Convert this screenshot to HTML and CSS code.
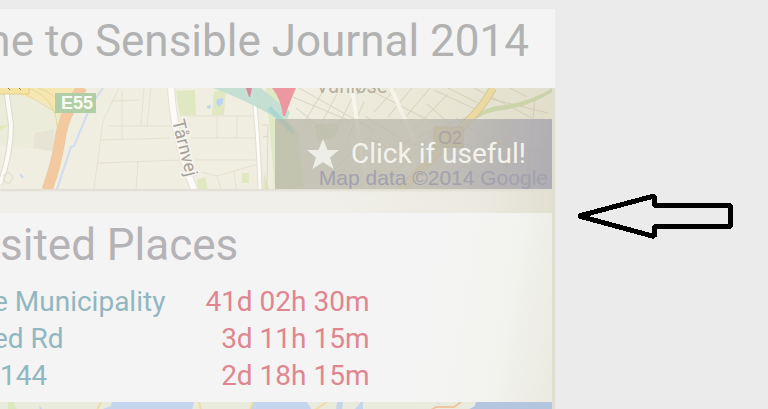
FILE: index.html
```html
<!DOCTYPE html>
<html lang="en">
<head>
<meta charset="utf-8">
<title>Sensible Journal 2014</title>
<link rel="stylesheet" href="styles.css">
</head>
<body>
<main class="page">
  <section class="phone">
    <header class="title-bar"><h1 class="title">me to Sensible Journal 2014</h1></header>
    <div class="content">
      <div class="map">
        <svg class="map-art" viewBox="0 88 552 101" preserveAspectRatio="none" aria-hidden="true">
          <defs>
            <linearGradient id="shade" x1="0" x2="1" y1="0" y2="0.15">
              <stop offset="0.55" stop-color="#c8c49c" stop-opacity="0"/>
              <stop offset="1" stop-color="#bdb99a" stop-opacity="0.3"/>
            </linearGradient>
          </defs>
          <rect y="88" width="552" height="101" fill="#f0eee1"/>
          <path d="M0 88H62L58 124 54 151 0 145Z" fill="#ebecda"/>
          <path d="M35 133L54 129 53 151 33 148Z" fill="#e8e4d5"/>
          <path d="M0 126L8 125 0 131Z" fill="#dfebb9"/>
          <path d="M12 88H74L59 119Q52 103 31 98L12 92Z" fill="#f5e7b2"/>
          <path d="M28 88Q56 98 57 126M38 88Q56 93 62 108M20 91L54 111" fill="none" stroke="#ead79a" stroke-width="1"/>
          <path d="M6 88L11 125Q11 154 0 184" fill="none" stroke="#dcdacd" stroke-width="6"/>
          <path d="M6 88L11 125Q11 154 0 184" fill="none" stroke="#fbfaf4" stroke-width="4"/>
          <path d="M4 175L9 172 13 177 9 184 4 181Z" fill="none" stroke="#deddc9"/>
          <path d="M82 87Q63 116 60 140Q56 166 47 190" fill="none" stroke="#e8cba6" stroke-width="11"/>
          <path d="M82 87Q63 116 60 140Q56 166 47 190" fill="none" stroke="#f5c9a0" stroke-width="9"/>
          <path d="M103 88L91 105 74 146 71 147 57 189" fill="none" stroke="#cfddef" stroke-width="2"/>
          <path d="M20 174L23 178" stroke="#c7d9f1" stroke-width="2"/>
          <path d="M119 88L103 121 94 189M101 140L170 138M108 126L172 126M122 91V140M144 88L141 126M151 88L147 126M98 163L182 160M138 162L136 189M112 101L139 100M188 116H255L257 138H191M217 116V138M237 116V138M195 160H256M201 172L217 176 258 164M217 176L221 189M234 170L236 189" fill="none" stroke="#e4e1cf"/>
          <path d="M176 91L195 90 196 115 180 116ZM214 91L226 90 224 115 212 115ZM242 173H249V183H242ZM197 180L205 177 208 189H198ZM264 173L269 189H263Z" fill="#e0e8c1"/>
          <path d="M217 99L223 98 223 103 219 107 216 103ZM207 106L211 105 210 109 207 108Z" fill="#bdd4f0"/>
          <path d="M171 88Q174 139 194 189" fill="none" stroke="#e4e1d7" stroke-width="8"/>
          <path d="M171 88Q174 139 194 189" fill="none" stroke="#fcfbf7" stroke-width="6"/>
          <path d="M253 88Q258 130 260 189" fill="none" stroke="#e1dfd3" stroke-width="5"/>
          <path d="M253 88Q258 130 260 189" fill="none" stroke="#fdfcf8" stroke-width="3"/>
          <path d="M262 125L268 125 267 189M263 137L268 136" fill="none" stroke="#dedac8"/>
          <path d="M266 88H281L282 112 298 133 304 189H275Z" fill="#dfe9c4"/>
          <path d="M213 88H261L290 112 285 124Q258 105 213 88Z" fill="#c5dfd3"/>
          <path d="M269 108L294 133" stroke="#a8d8ce" stroke-width="5"/>
          <path d="M314 125L338 123 335 138 318 141Z" fill="#d7e1bf"/>
          <path d="M293 97L350 121M299 88L375 131M296 108L330 135M305 121L323 91M320 126L337 94M335 133L352 98M348 138L364 102M366 88L432 122M374 112L395 89M388 117L412 88M399 125L430 88M411 132L448 94M427 104L450 124M434 90L475 109M448 88L478 103M365 116L410 145 440 145 490 185M384 151L465 118M456 118L491 142 548 153M474 88L532 118M491 99L548 113M510 88L527 97M535 98L526 187M450 180L510 120M380 187L434 134M334 170L367 138 412 158" fill="none" stroke="#dad4c2"/>
          <path d="M352 88L367 189M391 88L414 140" fill="none" stroke="#fbfaf2" stroke-width="4"/>
          <path d="M475 119Q482 106 506 105Q535 100 552 88V92Q534 104 510 109Q488 111 475 119Z" fill="#cfdcb0"/>
          <path d="M493 88Q484 106 464 125L420 171 401 189" fill="none" stroke="#dfcb92" stroke-width="8"/>
          <path d="M493 88Q484 106 464 125L420 171 401 189" fill="none" stroke="#f6e2a4" stroke-width="6"/>
          <path d="M272 88H296Q291 99 285 116H283Q281 99 272 88Z" fill="#ed98a1"/>
          <path d="M246 88H252L250 97H249Z" fill="#d9899a"/>
          <path d="M-2 86H29V94H-2Z" fill="#f6e4a4" stroke="#e5ce88"/>
          <path d="M8 88L10 90M19 88L21 90" stroke="#837f6c"/>
          <rect x="55" y="93" width="41" height="20" fill="#b1cea7"/>
          <text class="road-sign" x="61" y="109">E55</text>
          <text class="street" transform="translate(172 121) rotate(76)">Tårnvej</text>
          <text class="district" x="316" y="93">Vanløse</text>
          <rect x="434" y="127" width="29" height="20" fill="#e6cf8c" stroke="#c9b078"/>
          <text class="ring-sign" x="438" y="144">O2</text>
          <rect y="88" width="552" height="101" fill="url(#shade)"/>
        </svg>
        <button class="useful" type="button">
          <svg class="star" viewBox="0 0 32 31" aria-hidden="true"><path d="M16 0L20.500 11H32L23 18.500 26.500 30 16 23 5.500 30 9 18.500 0 11H11.500Z"/></svg>
          <span>Click if useful!</span>
        </button>
        <p class="credit">Map data ©2014 Google</p>
      </div>
      <section class="card">
        <h2 class="card-title">sited Places</h2>
        <table class="places">
          <tr><th scope="row">e Municipality</th><td>41d 02h 30m</td></tr>
          <tr><th scope="row">ed Rd</th><td>3d 11h 15m</td></tr>
          <tr><th scope="row">&nbsp;144</th><td>2d 18h 15m</td></tr>
        </table>
      </section>
      <svg class="coast" viewBox="0 402 552 8" preserveAspectRatio="none" aria-hidden="true">
        <rect y="402" width="552" height="8" fill="#e9ecdc"/>
        <path d="M8 402H14L17 410H8Z" fill="#dbe7bf"/>
        <path d="M112 402H194L192 410H100L111 406ZM252 402H307L312 410H250ZM337 402H343L342 410H336ZM361 402H363V410H354ZM436 402L442 405 438 404ZM476 402H552V410H468L475 406ZM39 405L43 410H40Z" fill="#c5d5ee"/>
        <path d="M476 402H552V410H468L475 406Z" fill="#b3c5df"/>
        <path d="M101 402L97 410M199 402L201 410M253 402L250 410M327 402L315 410" stroke="#f0dca5" stroke-width="2"/>
        <path d="M461 402L454 407H436L431 410" fill="none" stroke="#edc6a0" stroke-width="2"/>
      </svg>
    </div>
  </section>
  <aside class="pointer">
    <svg class="arrow" viewBox="577 193 158 47" role="img" aria-label="Arrow pointing left">
      <path d="M580 216L655 196V205.500H731V226.500H655V236.500Z" fill="none" stroke="#000" stroke-width="5" stroke-linejoin="bevel" shape-rendering="crispEdges"/>
    </svg>
  </aside>
</main>
</body>
</html>
```
FILE: styles.css
```css
* {
  box-sizing: border-box;
}

body {
  margin: 0;
  background: #ebebeb;
  font-family: Roboto, "Liberation Sans", sans-serif;
}

.page {
  display: grid;
  grid-template-columns: 555fr 213fr;
  height: 100vh;
  padding-top: 9px;
  overflow: hidden;
}

.phone {
  min-width: 0;
  overflow: hidden;
  background: linear-gradient(90deg, #f0efe9 60%, #ebe9df 88%, #e1dfd0);
}

.title-bar {
  display: flex;
  justify-content: flex-end;
  padding: 6px 26px 21px 0;
  background: #f4f4f4;
}

.title {
  margin: 0;
  font-size: 44px;
  line-height: 52px;
  font-weight: 400;
  white-space: nowrap;
  color: #b2b2b2;
}

.content {
  padding-right: 3px;
}

.map {
  position: relative;
  margin-bottom: 24px;
  box-shadow: 0 2px 2px #e0ded3;
}

.map-art {
  display: block;
  width: 100%;
  height: 101px;
}

.road-sign {
  font: 700 18px "Liberation Sans", sans-serif;
  fill: #f8faf4;
}

.street {
  font: 18px Roboto, sans-serif;
  fill: #a5a198;
  stroke: #f7f5ee;
  stroke-width: 3px;
  paint-order: stroke;
}

.district {
  font: 20px Roboto, sans-serif;
  fill: #b7aea0;
}

.ring-sign {
  font: 18px "Liberation Sans", sans-serif;
  fill: #5c5870;
}

.useful {
  position: absolute;
  right: 0;
  bottom: 0;
  display: flex;
  align-items: center;
  gap: 12px;
  width: 277px;
  height: 70px;
  padding: 0 0 0 32px;
  border: 0;
  background: linear-gradient(100deg, rgba(184, 183, 168, 0.75), rgba(188, 186, 174, 0.75) 50%, rgba(167, 165, 175, 0.85));
  font: 28px/32px Roboto, "Liberation Sans", sans-serif;
  white-space: nowrap;
  color: #f3f3ee;
}

.star {
  width: 32px;
  height: 31px;
  fill: #eeeee8;
}

.credit {
  position: absolute;
  right: 4px;
  bottom: 0;
  margin: 0;
  font: 21px/22px "Liberation Sans", sans-serif;
  white-space: nowrap;
  color: #a3a1b0;
}

.card {
  padding: 6px 0 8px;
  background: linear-gradient(100deg, #f4f4f4 75%, #f2f2ee 90%, #eaeae0);
}

.card-title {
  margin: 0;
  font-size: 44px;
  line-height: 52px;
  font-weight: 400;
  color: #b5b3b6;
}

.places {
  margin: 12px 0 0 -7px;
  border-collapse: collapse;
  font-size: 28px;
  line-height: 37px;
}

.places th,
.places td {
  padding: 0;
  font-weight: 400;
  white-space: nowrap;
}

.places th {
  padding-right: 40px;
  text-align: left;
  color: #91b7c0;
}

.places td {
  text-align: right;
  color: #e08690;
}

.coast {
  display: block;
  width: 100%;
  height: 8px;
}

.pointer {
  padding: 184px 34px 0 21px;
}

.arrow {
  display: block;
  width: 100%;
}
```
